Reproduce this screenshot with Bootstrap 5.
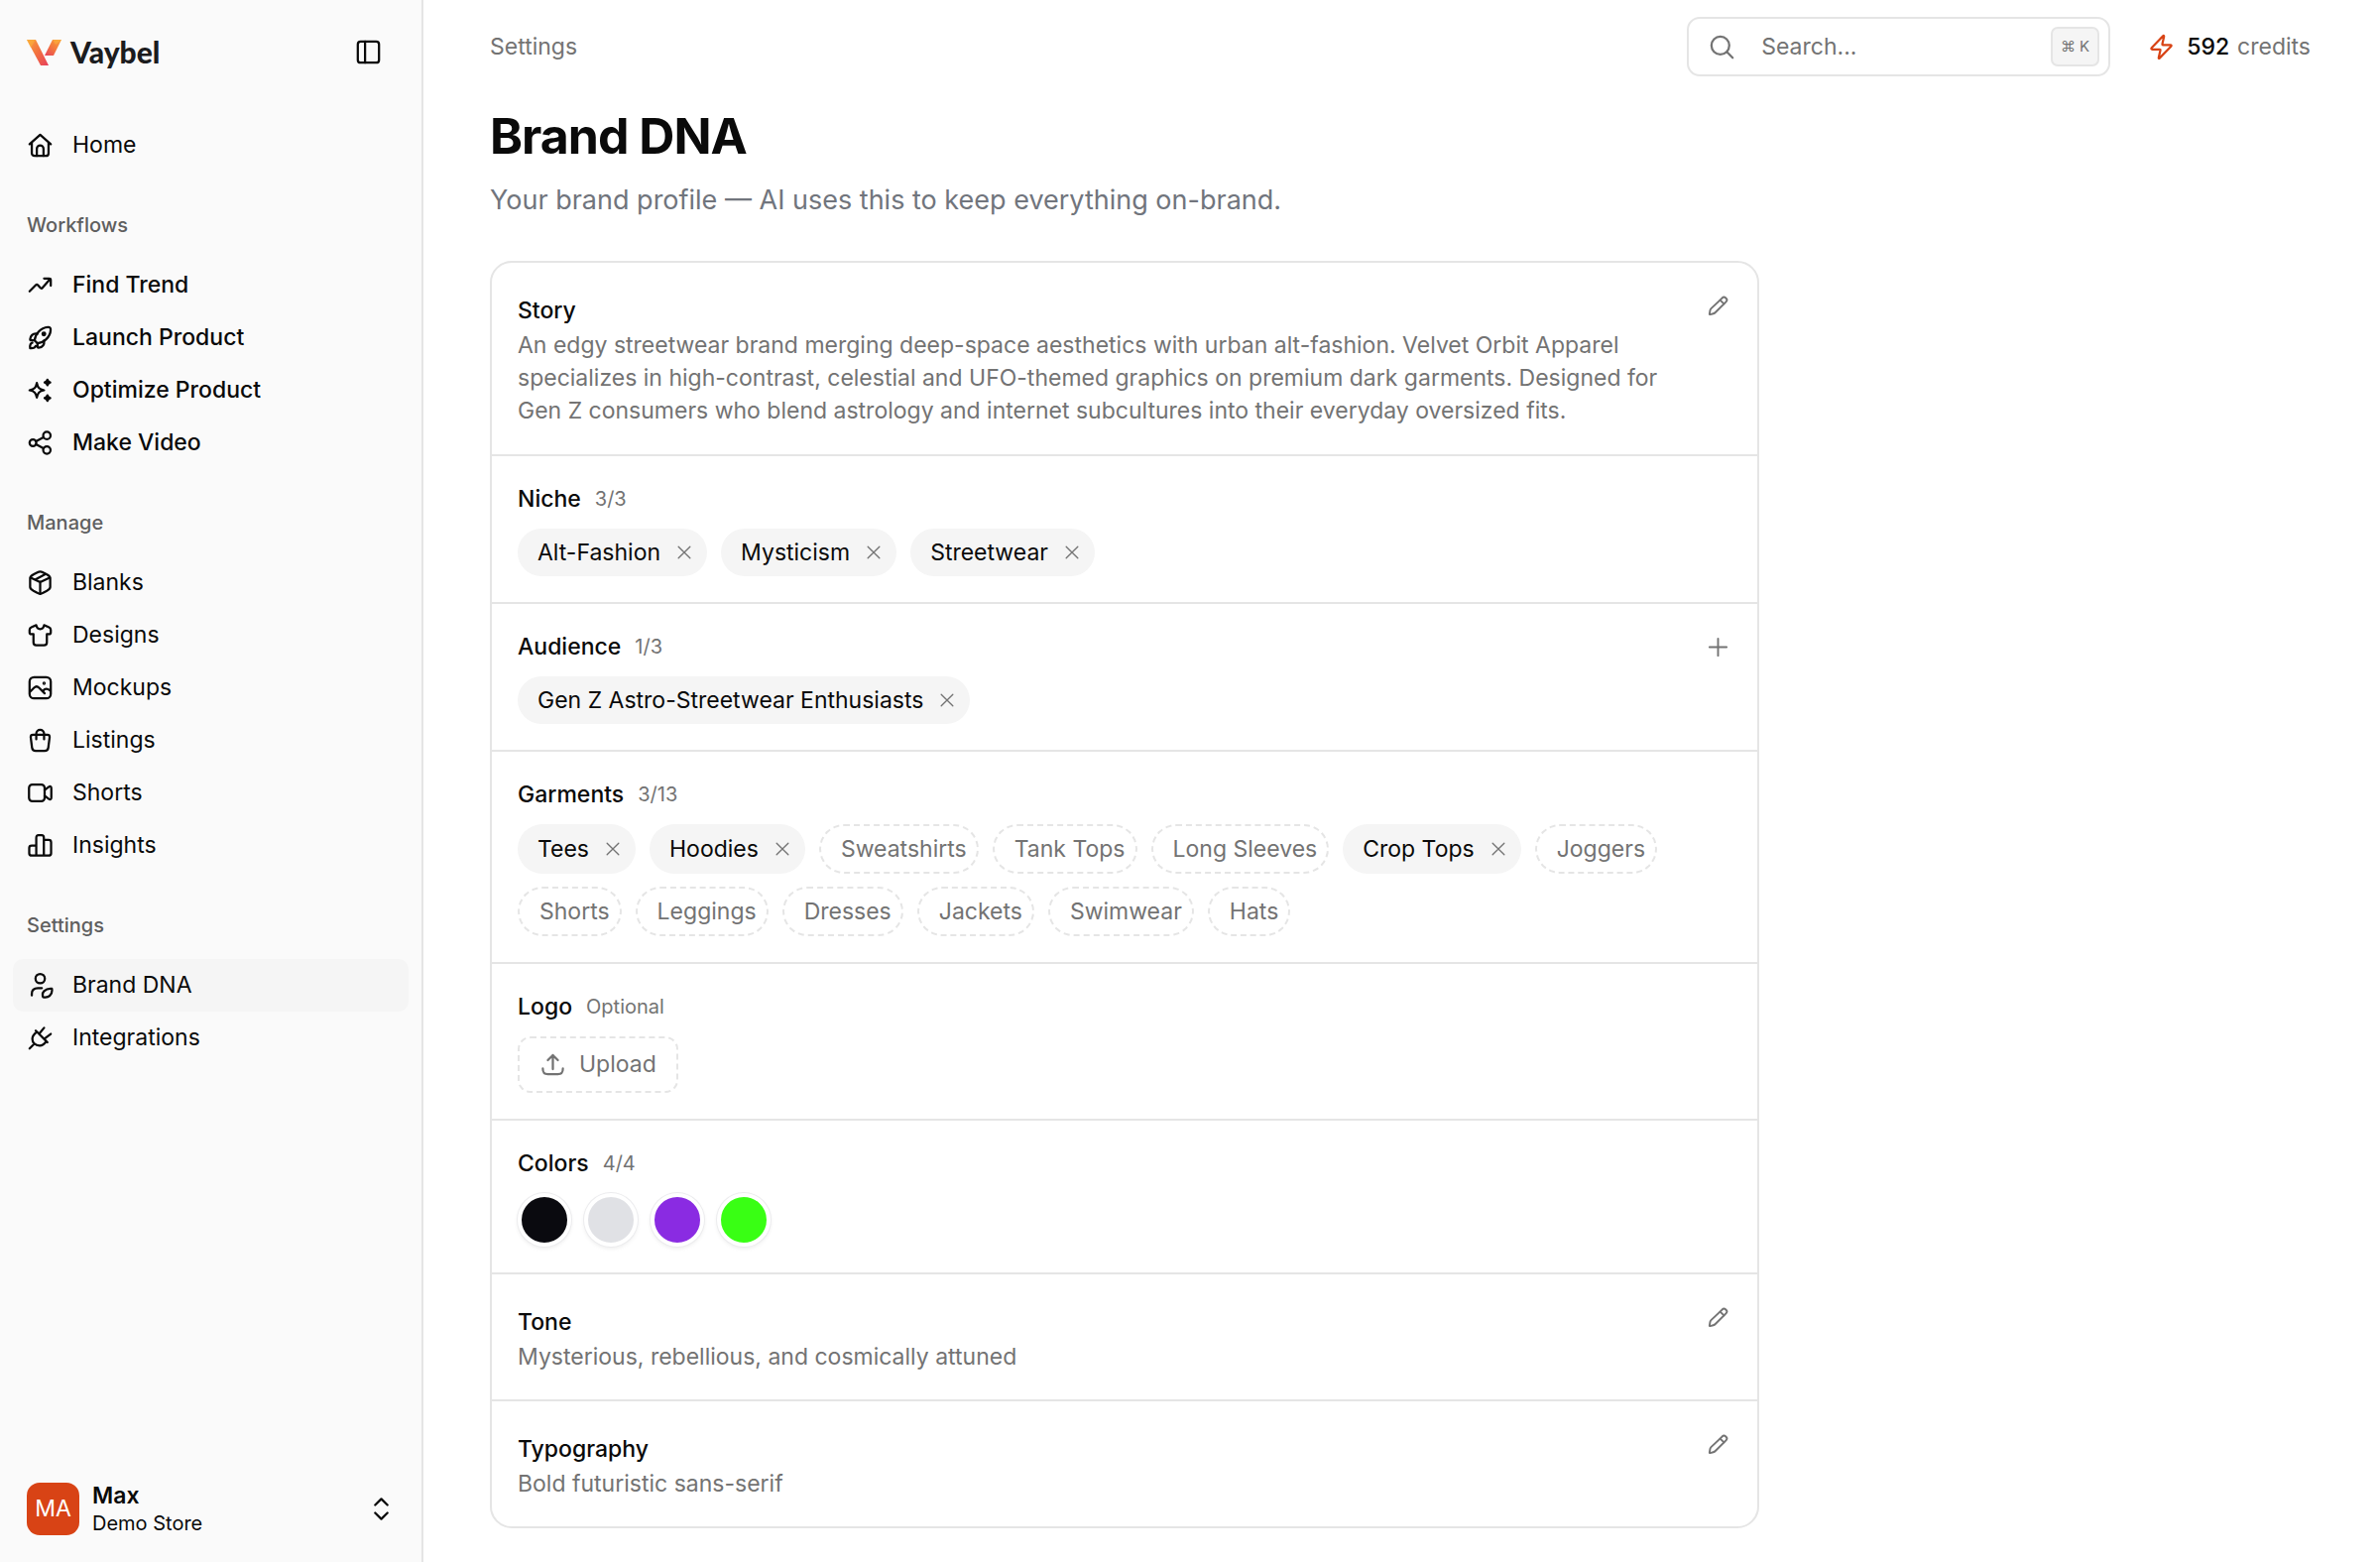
<!DOCTYPE html>
<html lang="en">
<head>
<meta charset="utf-8">
<meta name="viewport" content="width=device-width, initial-scale=1">
<title>Brand DNA · Vaybel</title>
<link href="https://cdn.jsdelivr.net/npm/bootstrap@5.3.0/dist/css/bootstrap.min.css" rel="stylesheet">
<style>
  :root { --ink: #0a0a0a; --muted: #737373; --line: #e5e5e5; --soft: #f5f5f5; --brand: #d84315; }
  body { font-family: Inter, "Liberation Sans", sans-serif; font-size: 23px; line-height: 33px; color: var(--ink); background: #fff; }
  svg { fill: none; stroke: currentColor; stroke-width: 2; stroke-linecap: round; stroke-linejoin: round; flex: none; }
  button { color: inherit; }
  .bare { background: none; border: 0; padding: 0; }
  .muted { color: var(--muted); }
  .tiny { font-size: 20px; }
  .bolt { color: var(--brand); }

  .side { width: 427px; background: #fafafa; border-right: 2px solid var(--line); height: 100vh; top: 0; padding: 0 13px; }
  .side-top { height: 120px; padding: 26px 13px 0 14px; }
  .logo-name { font-family: Lato, sans-serif; font-weight: 900; font-size: 30px; line-height: 53px; color: #1c1c1e; }
  .side-top .toggle { height: 53px; margin-right: 14px; }
  .side .nav-link { height: 53px; padding: 0 14px; gap: 19px; color: var(--ink); border-radius: 10px; }
  .side .nav-link.active { background: var(--soft); }
  .side .nav-link svg { width: 27px; height: 27px; }
  .side-label { font-size: 20px; font-weight: 500; line-height: 54px; color: #5f5f5f; margin: 27px 14px 7px; }
  .side-user { padding: 13px 14px; margin-bottom: 13px; gap: 13px; }
  .avatar-sq { width: 53px; height: 53px; border-radius: 13px; background: var(--brand); color: #fff; }
  .user-name { line-height: 29px; font-weight: 600; }
  .user-store { line-height: 26px; font-size: 20px; }

  .page { padding: 0 70px 35px 67px; min-width: 0; }
  .topbar { height: 94px; }
  .search-box { width: 427px; height: 60px; border: 2px solid var(--line); border-radius: 13px; padding: 0 9px 0 20px; margin-right: 38px; }
  .search-box input { border: 0; outline: 0; background: none; width: 0; margin-left: 26px; color: var(--ink); }
  .search-box input::placeholder { color: var(--muted); opacity: 1; }
  .key-hint { font-family: Inter, "DejaVu Sans", sans-serif; font-size: 15px; line-height: 36px; padding: 0 8px; border: 2px solid var(--line); border-radius: 7px; background: var(--soft); color: var(--muted); }
  h1.page-title { font-size: 50px; font-weight: 700; line-height: 60px; letter-spacing: -1px; margin: 13px 0 17px; }
  .page-sub { font-size: 27px; line-height: 36px; color: #71757d; margin: 0 0 43px; }

  .dna { max-width: 1280px; border: 2px solid var(--line); border-radius: 22px; }
  .dna > section { padding: 26px; }
  .dna > section + section { border-top: 2px solid var(--line); }
  .dna h2 { font-size: 23px; font-weight: 500; line-height: 34px; margin: 0; }
  .sec-head { gap: 14px; margin-bottom: 13px; }
  .sec-text { padding-top: 5px; }
  .sec-text p { margin: 2px 0 0; max-width: 1180px; }
  .sec-story { padding-bottom: 27px !important; }
  .edit-btn { width: 27px; height: 34px; }
  .chips { gap: 13px 14px; }
  .chip { min-height: 48px; border-radius: 24px; background: var(--soft); padding: 0 13px 0 20px; gap: 14px; }
  .chip svg { stroke-width: 1.6; }
  .chips-tall .chip { min-height: 50px; border-radius: 25px; }
  .chip-add { height: 50px; border: 2px dashed var(--line); border-radius: 25px; background: none; padding: 0 10px 0 20px; color: var(--muted); }
  .upload-btn { height: 57px; border: 2px dashed var(--line); border-radius: 13px; background: none; padding: 0 20px; gap: 13px; color: var(--muted); }
  .swatches { gap: 13px; }
  .swatch { width: 54px; height: 54px; border-radius: 50%; border: 4px solid #fff; padding: 0; box-shadow: 0 0 0 1px #ececee, 0 2px 4px rgba(0,0,0,.08); }
</style>
</head>
<body>
<svg class="d-none" aria-hidden="true">
  <symbol id="i-pencil" viewBox="0 0 24 24"><path d="M15.200 4.800 16.600 3.400a2.300 2.300 0 0 1 3.200 0l.8.8a2.300 2.300 0 0 1 0 3.200L9.200 18.800a5 5 0 0 1-2.200 1.300l-3.400.9a.5.5 0 0 1-.6-.6l.6-3.600a5 5 0 0 1 1.300-2.300L15.200 4.800Z"/><path d="m14.200 5.800 4 4"/></symbol>
  <symbol id="i-x" viewBox="0 0 24 24"><path d="M5 5 19 19M19 5 5 19"/></symbol>
</svg>
<div class="d-flex min-vh-100">
  <aside class="side d-flex flex-column flex-shrink-0 position-sticky">
    <div class="side-top d-flex align-items-start justify-content-between">
      <a href="#" class="d-flex align-items-center text-decoration-none">
        <svg width="36" height="28" viewBox="0 0 36 28" class="me-2" aria-hidden="true">
          <defs>
            <linearGradient id="g1" x1="0" y1="0" x2="1" y2="1"><stop offset="0" stop-color="#f9a33c"/><stop offset=".5" stop-color="#f2703f"/><stop offset="1" stop-color="#e73f5c"/></linearGradient>
            <linearGradient id="g2" x1="1" y1="0" x2="0" y2="1"><stop offset="0" stop-color="#f9a33c"/><stop offset=".5" stop-color="#f4793c"/><stop offset="1" stop-color="#e6405d"/></linearGradient>
          </defs>
          <path fill="url(#g1)" stroke="none" d="M0 1h9l13 26h-8Z"/>
          <path fill="url(#g2)" stroke="none" d="M26 1h9l-8 16h-9Z"/>
          <path fill="#fbb03b" stroke="none" d="M0 1h9l-5 8ZM26 1h9l-6 5Z" opacity=".6"/>
        </svg>
        <span class="logo-name">Vaybel</span>
      </a>
      <button type="button" class="bare toggle d-flex align-items-center" aria-label="Toggle sidebar">
        <svg width="27" height="27" viewBox="0 0 24 24"><rect x="2.500" y="2.500" width="19" height="19" rx="2.500"/><path d="M9 2.500v19"/></svg>
      </button>
    </div>
    <nav class="nav flex-column flex-nowrap">
      <a class="nav-link d-flex align-items-center" href="#"><svg viewBox="0 0 24 24"><path d="M2.500 11 12 2.500 21.500 11M4.500 9.500V19a2.500 2.500 0 0 0 2.500 2.500h10a2.500 2.500 0 0 0 2.500-2.500V9.500"/><path d="M9 21.500V15a3 3 0 0 1 6 0v6.500"/></svg>Home</a>
      <div class="side-label">Workflows</div>
      <a class="nav-link fw-medium d-flex align-items-center" href="#"><svg viewBox="0 0 24 24"><path d="M2.500 17.500 8 12c.8-.8 1.300-.7 2 0l2 2.300c.8.900 1.500.9 2.200 0L21 6.500"/><path d="M15.500 6h4.500c1 0 1.500.4 1.500 1.500V12.500"/></svg>Find Trend</a>
      <a class="nav-link fw-medium d-flex align-items-center" href="#"><svg viewBox="0 0 24 24"><path d="M7 14.500C7.500 9 12 3 19 2.600c1.700-.1 2.500.7 2.400 2.400C21 12 15 16.500 9.500 17Z"/><path d="M9.500 8.500C5.500 8 3.500 10 3 13.500c0 .6.500 1 1.200.9L7 14.300M15.500 14.500c.5 4-1.500 6-5 6.500-.6 0-1-.5-.9-1.200l.1-2.800M3 21.500c-.3-3 .3-4.700 2-5M3 21.500c3 .2 4.500-.5 5-2"/><circle cx="15.300" cy="8.700" r="1.200" fill="currentColor"/></svg>Launch Product</a>
      <a class="nav-link fw-medium d-flex align-items-center" href="#"><svg viewBox="0 0 24 24"><path d="M9 5.500c1 4.500 2 5.500 6.500 6.500-4.500 1-5.500 2-6.500 6.500-1-4.500-2-5.500-6.500-6.500C7 11 8 10 9 5.500Z"/><path fill="currentColor" d="M18.500 2.500c.4 1.700.9 2.100 2.500 2.500-1.600.4-2.100.9-2.500 2.500-.4-1.600-.9-2.100-2.500-2.500 1.600-.4 2.100-.8 2.500-2.500ZM18.500 16.500c.4 1.700.9 2.100 2.500 2.500-1.600.4-2.100.9-2.500 2.500-.4-1.600-.9-2.100-2.500-2.500 1.600-.4 2.100-.8 2.500-2.500Z"/></svg>Optimize Product</a>
      <a class="nav-link fw-medium d-flex align-items-center" href="#"><svg viewBox="0 0 24 24"><circle cx="5.500" cy="12" r="3"/><circle cx="18" cy="5.500" r="3.300"/><circle cx="18" cy="18.500" r="3.300"/><path d="m8.300 10.700 6.600-3.500M8.300 13.300l6.600 3.500"/></svg>Make Video</a>
      <div class="side-label">Manage</div>
      <a class="nav-link d-flex align-items-center" href="#"><svg viewBox="0 0 24 24"><path d="M12 2c-1 0-2 .6-3.500 1.400L6 4.700C4 5.800 3 6.500 3 8v8c0 1.500 1 2.200 3 3.300l2.500 1.300C10 21.400 11 22 12 22s2-.6 3.500-1.400l2.500-1.300c2-1.100 3-1.800 3-3.300V8c0-1.500-1-2.200-3-3.300l-2.500-1.300C14 2.600 13 2 12 2Z"/><path d="m3.500 7.500 8.500 4 8.500-4M12 11.500V22M7.500 9.300l9-4.800"/></svg>Blanks</a>
      <a class="nav-link d-flex align-items-center" href="#"><svg viewBox="0 0 24 24"><path d="M6 11v7.500c0 2 .8 2.500 2.500 2.500h7c1.700 0 2.500-.5 2.500-2.500V11M6 11H4c-1 0-1.500-.4-1.500-1.500V7c0-1.200.7-1.700 2-2.300L8.500 3c.4 2 1.500 3.500 3.500 3.500S15.100 5 15.500 3l4 1.700c1.300.6 2 1.100 2 2.300v2.500c0 1.100-.5 1.500-1.500 1.500h-2"/></svg>Designs</a>
      <a class="nav-link d-flex align-items-center" href="#"><svg viewBox="0 0 24 24"><rect x="2.500" y="2.500" width="19" height="19" rx="4"/><circle cx="15.500" cy="8" r=".5" fill="currentColor"/><path d="M3 15.500 6.500 12c1.600-1.500 3-1.500 4.500 0l5 5M14.500 15c1.500-2.500 3.800-2.500 6.500-.5"/></svg>Mockups</a>
      <a class="nav-link d-flex align-items-center" href="#"><svg viewBox="0 0 24 24"><path d="M3.500 9c0-1.500.5-2 2-2h13c1.500 0 2 .5 2 2l-1.200 9.500c-.3 2.200-1.300 3-3.300 3H8c-2 0-3-.8-3.300-3Z"/><path d="M8.500 11V6a3.500 3.500 0 0 1 7 0v5"/></svg>Listings</a>
      <a class="nav-link d-flex align-items-center" href="#"><svg viewBox="0 0 24 24"><rect x="2" y="4.500" width="14" height="15" rx="3"/><path d="m16 9.500 3.500-2.700c1.500-1 2.500-.8 2.500 1v8.400c0 1.800-1 2-2.500 1L16 14.500"/></svg>Shorts</a>
      <a class="nav-link d-flex align-items-center" href="#"><svg viewBox="0 0 24 24"><path d="M8.500 21V5c0-1.500.7-2.200 2-2.200h2.800c1.300 0 2 .7 2 2.200v16M8.500 12H4.500C3 12 2.200 12.600 2.200 14v5c0 1.400.8 2 2.300 2h15c1.500 0 2.300-.6 2.300-2V9c0-1.400-.8-2-2.300-2h-4"/></svg>Insights</a>
      <div class="side-label">Settings</div>
      <a class="nav-link active d-flex align-items-center" href="#" aria-current="page"><svg viewBox="0 0 24 24"><circle cx="12" cy="6" r="4.200"/><path d="M4.500 21v-1.500C4.500 16 7 14.500 10 14.500h3.500M14.500 22.500c-.7-2.500-.3-4 1-5.300 1.800-1.800 4-2.600 7-2.200.5 3-.3 5-2 6.500-1.500 1.300-3.500 1.500-6 1Z"/></svg>Brand DNA</a>
      <a class="nav-link d-flex align-items-center" href="#"><svg viewBox="0 0 24 24"><path d="M9 6.500 17.500 15c-2 3-3.500 4-6 4-4 0-6.500-3-6.500-6 0-2.500 1.500-4.500 4-6.500ZM2.500 21.500 6.500 17.500M8 5.500l1.500 1.500M17 14.500l1.500 1.500M11 8.500 15.500 3M15.500 13 21.500 8.500"/></svg>Integrations</a>
    </nav>
    <button type="button" class="bare side-user mt-auto d-flex align-items-center text-start">
      <span class="avatar-sq d-flex align-items-center justify-content-center">MA</span>
      <span class="flex-grow-1 d-flex flex-column"><span class="user-name">Max</span><span class="user-store">Demo Store</span></span>
      <svg width="27" height="27" viewBox="0 0 24 24"><path d="m6.500 8.500 5.500-5.500 5.500 5.500M6.500 15.500 12 21l5.500-5.500"/></svg>
    </button>
  </aside>

  <main class="page flex-grow-1">
    <header class="topbar d-flex align-items-center">
      <a href="#" class="muted text-decoration-none me-auto">Settings</a>
      <div class="search-box d-flex align-items-center">
        <svg class="muted" width="27" height="27" viewBox="0 0 24 24"><circle cx="10.500" cy="10.500" r="8"/><path d="m16.500 16.500 5 5"/></svg>
        <input class="flex-grow-1 p-0" type="text" placeholder="Search..." aria-label="Search">
        <kbd class="key-hint text-nowrap flex-shrink-0">⌘ K</kbd>
      </div>
      <a href="#" class="d-flex align-items-center text-decoration-none text-reset">
        <svg width="27" height="27" viewBox="0 0 24 24" class="bolt me-2"><path d="M13.500 2 3.300 12.700c-.6.700-.3 1.300.6 1.300h6.600c.5 0 .7.300.6.800L9.600 21.500c-.1.800.3.900.8.400L20.700 11.300c.6-.7.300-1.300-.6-1.300h-6.600c-.5 0-.7-.3-.6-.8l1.500-6.700c.1-.8-.4-1-.9-.5Z"/></svg>
        <span class="fw-medium ms-1 me-2">592</span><span class="muted">credits</span>
      </a>
    </header>

    <h1 class="page-title">Brand DNA</h1>
    <p class="page-sub">Your brand profile — AI uses this to keep everything on-brand.</p>

    <div class="dna">
      <section class="sec-story d-flex align-items-start justify-content-between">
        <div class="sec-text"><h2>Story</h2>
          <p class="muted">An edgy streetwear brand merging deep-space aesthetics with urban alt-fashion. Velvet Orbit Apparel specializes in high-contrast, celestial and UFO-themed graphics on premium dark garments. Designed for Gen Z consumers who blend astrology and internet subcultures into their everyday oversized fits.</p></div>
        <button type="button" class="bare edit-btn muted d-flex align-items-center justify-content-center" aria-label="Edit story"><svg width="23" height="23"><use href="#i-pencil"/></svg></button>
      </section>

      <section>
        <div class="sec-head d-flex align-items-center"><h2>Niche</h2><span class="tiny muted">3/3</span></div>
        <div class="chips d-flex flex-wrap">
          <span class="chip d-flex align-items-center">Alt-Fashion<button type="button" class="bare muted d-flex" aria-label="Remove Alt-Fashion"><svg width="20" height="20"><use href="#i-x"/></svg></button></span>
          <span class="chip d-flex align-items-center">Mysticism<button type="button" class="bare muted d-flex" aria-label="Remove Mysticism"><svg width="20" height="20"><use href="#i-x"/></svg></button></span>
          <span class="chip d-flex align-items-center">Streetwear<button type="button" class="bare muted d-flex" aria-label="Remove Streetwear"><svg width="20" height="20"><use href="#i-x"/></svg></button></span>
        </div>
      </section>

      <section>
        <div class="sec-head d-flex align-items-center"><h2>Audience</h2><span class="tiny muted">1/3</span>
          <button type="button" class="bare edit-btn muted d-flex align-items-center justify-content-center ms-auto" aria-label="Add audience"><svg width="23" height="23" viewBox="0 0 24 24"><path d="M12 3v18M3 12h18"/></svg></button></div>
        <div class="chips d-flex flex-wrap">
          <span class="chip d-flex align-items-center">Gen Z Astro-Streetwear Enthusiasts<button type="button" class="bare muted d-flex" aria-label="Remove audience"><svg width="20" height="20"><use href="#i-x"/></svg></button></span>
        </div>
      </section>

      <section>
        <div class="sec-head d-flex align-items-center"><h2>Garments</h2><span class="tiny muted">3/13</span></div>
        <div class="chips chips-tall d-flex flex-wrap">
          <span class="chip d-flex align-items-center">Tees<button type="button" class="bare muted d-flex" aria-label="Remove Tees"><svg width="20" height="20"><use href="#i-x"/></svg></button></span>
          <span class="chip d-flex align-items-center">Hoodies<button type="button" class="bare muted d-flex" aria-label="Remove Hoodies"><svg width="20" height="20"><use href="#i-x"/></svg></button></span>
          <button type="button" class="chip-add">Sweatshirts</button>
          <button type="button" class="chip-add">Tank Tops</button>
          <button type="button" class="chip-add">Long Sleeves</button>
          <span class="chip d-flex align-items-center">Crop Tops<button type="button" class="bare muted d-flex" aria-label="Remove Crop Tops"><svg width="20" height="20"><use href="#i-x"/></svg></button></span>
          <button type="button" class="chip-add">Joggers</button>
          <button type="button" class="chip-add">Shorts</button>
          <button type="button" class="chip-add">Leggings</button>
          <button type="button" class="chip-add">Dresses</button>
          <button type="button" class="chip-add">Jackets</button>
          <button type="button" class="chip-add">Swimwear</button>
          <button type="button" class="chip-add">Hats</button>
        </div>
      </section>

      <section>
        <div class="sec-head d-flex align-items-center"><h2>Logo</h2><span class="tiny muted">Optional</span></div>
        <button type="button" class="upload-btn d-flex align-items-center"><svg width="27" height="27" viewBox="0 0 24 24"><path d="M12 16V3.500M7.500 8 12 3.500 16.500 8M3 15.500c0 3.500 1 5 4.500 5h9c3.500 0 4.500-1.500 4.500-5"/></svg>Upload</button>
      </section>

      <section>
        <div class="sec-head d-flex align-items-center"><h2>Colors</h2><span class="tiny muted">4/4</span></div>
        <div class="swatches d-flex">
          <button type="button" class="swatch" style="background:#0a0a0f" aria-label="Black"></button>
          <button type="button" class="swatch" style="background:#e0e1e5" aria-label="Silver"></button>
          <button type="button" class="swatch" style="background:#8a2be2" aria-label="Violet"></button>
          <button type="button" class="swatch" style="background:#39ff14" aria-label="Neon green"></button>
        </div>
      </section>

      <section class="d-flex align-items-start justify-content-between">
        <div class="sec-text"><h2>Tone</h2><p class="muted">Mysterious, rebellious, and cosmically attuned</p></div>
        <button type="button" class="bare edit-btn muted d-flex align-items-center justify-content-center" aria-label="Edit tone"><svg width="23" height="23"><use href="#i-pencil"/></svg></button>
      </section>

      <section class="d-flex align-items-start justify-content-between">
        <div class="sec-text"><h2>Typography</h2><p class="muted">Bold futuristic sans-serif</p></div>
        <button type="button" class="bare edit-btn muted d-flex align-items-center justify-content-center" aria-label="Edit typography"><svg width="23" height="23"><use href="#i-pencil"/></svg></button>
      </section>
    </div>
  </main>
</div>
<script src="https://cdn.jsdelivr.net/npm/bootstrap@5.3.0/dist/js/bootstrap.bundle.min.js"></script>
</body>
</html>
